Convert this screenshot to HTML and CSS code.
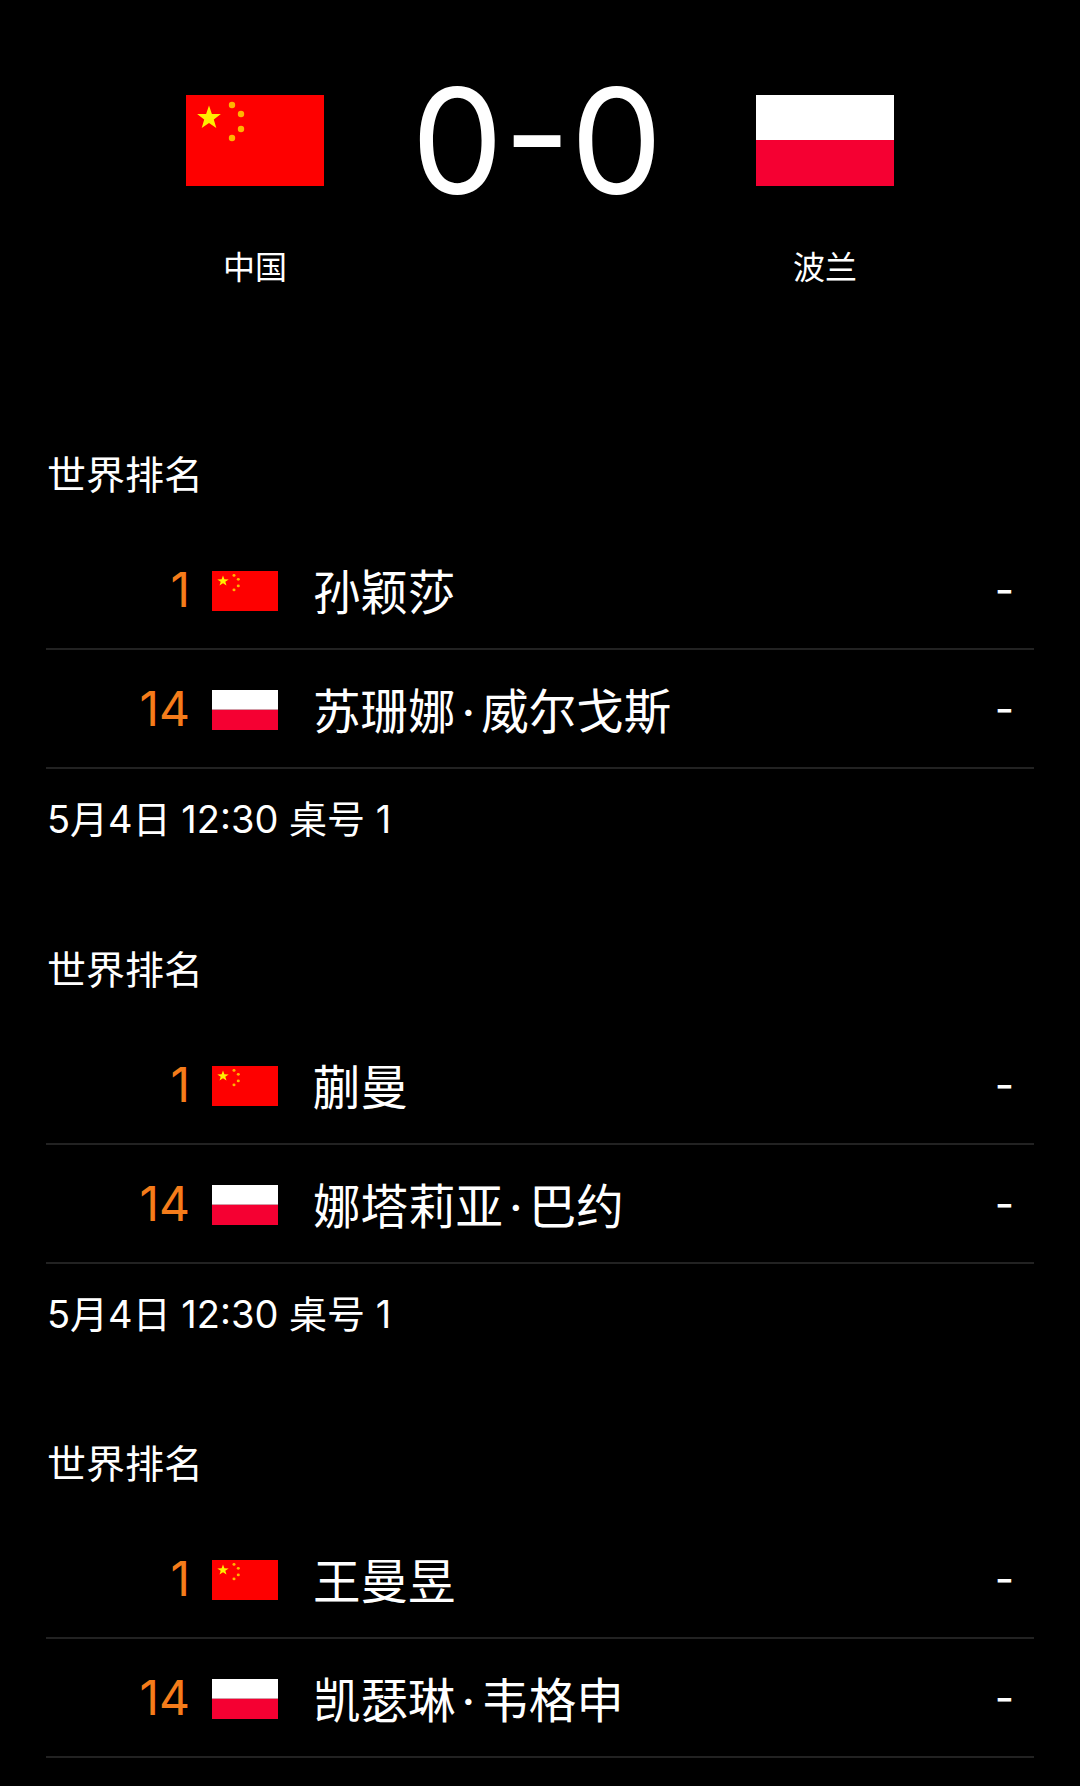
FILE: index.html
```html
<!DOCTYPE html>
<html lang="zh-CN">

<head>
    <meta charset="UTF-8">
    <meta name="viewport" content="width=device-width, initial-scale=1.0">
    <title>中国 0-0 波兰</title>
    <link rel="stylesheet" href="styles.css">
</head>

<body>
    <svg class="defs" width="0" height="0" aria-hidden="true">
        <symbol id="cn" viewBox="0 0 138 91" preserveAspectRatio="none">
            <rect width="138" height="91" fill="#fe0000"/>
            <polygon fill="#ffee00" points="23,10.5 25.9,19 34.9,19.1 27.8,24.5 30.3,33.1 23,28 15.7,33.1 18.2,24.5 11.1,19.1 20.1,19"/>
            <circle cx="46" cy="10" r="3.2" fill="#ffb400"/>
            <circle cx="55" cy="19" r="3.2" fill="#ffb400"/>
            <circle cx="55" cy="34" r="3.2" fill="#ffb400"/>
            <circle cx="46" cy="43" r="3.2" fill="#ffb400"/>
        </symbol>
        <symbol id="pl" viewBox="0 0 138 91" preserveAspectRatio="none">
            <rect width="138" height="45" fill="#ffffff"/>
            <rect y="45" width="138" height="46" fill="#f50032"/>
        </symbol>
    </svg>

    <header class="match">
        <div class="team">
            <svg class="flag-big"><use href="#cn"/></svg>
            <div class="team-name">中国</div>
        </div>
        <div class="score">0-0</div>
        <div class="team">
            <svg class="flag-big"><use href="#pl"/></svg>
            <div class="team-name">波兰</div>
        </div>
    </header>

    <section class="game">
        <h3>世界排名</h3>
        <div class="row">
            <span class="rank">1</span>
            <svg class="flag"><use href="#cn"/></svg>
            <span class="name">孙颖莎</span>
            <span class="pts">-</span>
        </div>
        <div class="row">
            <span class="rank">14</span>
            <svg class="flag"><use href="#pl"/></svg>
            <span class="name">苏珊娜<span class="dot">·</span>威尔戈斯</span>
            <span class="pts">-</span>
        </div>
        <p class="when">5月4日 12:30 桌号 1</p>
    </section>

    <section class="game">
        <h3>世界排名</h3>
        <div class="row">
            <span class="rank">1</span>
            <svg class="flag"><use href="#cn"/></svg>
            <span class="name">蒯曼</span>
            <span class="pts">-</span>
        </div>
        <div class="row">
            <span class="rank">14</span>
            <svg class="flag"><use href="#pl"/></svg>
            <span class="name">娜塔莉亚<span class="dot">·</span>巴约</span>
            <span class="pts">-</span>
        </div>
        <p class="when">5月4日 12:30 桌号 1</p>
    </section>

    <section class="game">
        <h3>世界排名</h3>
        <div class="row">
            <span class="rank">1</span>
            <svg class="flag"><use href="#cn"/></svg>
            <span class="name">王曼昱</span>
            <span class="pts">-</span>
        </div>
        <div class="row">
            <span class="rank">14</span>
            <svg class="flag"><use href="#pl"/></svg>
            <span class="name">凯瑟琳<span class="dot">·</span>韦格申</span>
            <span class="pts">-</span>
        </div>
    </section>
</body>

</html>
```

FILE: styles.css
```css
html {
    background: #000;
}

body {
    margin: 0;
    background: #000;
    color: #fff;
    font-family: Inter, "Noto Sans CJK SC", sans-serif;
}

.defs {
    display: block;
    height: 0;
}

.match {
    display: flex;
    justify-content: space-between;
    align-items: flex-start;
    padding: 85px 186px 0;
    height: 447px;
    box-sizing: border-box;
}

.team {
    width: 138px;
    padding-top: 10px;
    text-align: center;
}

.flag-big {
    display: block;
    width: 138px;
    height: 91px;
}

.team-name {
    margin-top: 62px;
    font-size: 32px;
    line-height: 40px;
}

.score {
    margin-right: 6px;
    font-size: 146px;
    font-weight: 400;
    line-height: 112px;
}

.game {
    padding: 0 46px;
    margin-bottom: 97.5px;
}

.game:last-child {
    margin-bottom: 0;
}

h3 {
    margin: 0 0 28px;
    padding-left: 1px;
    font-size: 39px;
    font-weight: 400;
    line-height: 56px;
}

.row {
    display: flex;
    align-items: center;
    height: 119px;
    box-sizing: border-box;
    border-bottom: 2px solid #222;
}

.rank {
    width: 144px;
    text-align: right;
    font-size: 48px;
    font-weight: 400;
    color: #f57c1a;
}

.flag {
    width: 66px;
    height: 40px;
    margin: 3px 35px 0 22px;
}

.name {
    flex: 1;
    font-size: 47.5px;
}

.dot {
    margin: 0 6px;
}

.pts {
    margin-right: 20px;
    font-size: 42px;
}

.when {
    margin: 25px 0 0;
    padding-left: 1px;
    font-size: 38px;
    line-height: 50px;
}
```
